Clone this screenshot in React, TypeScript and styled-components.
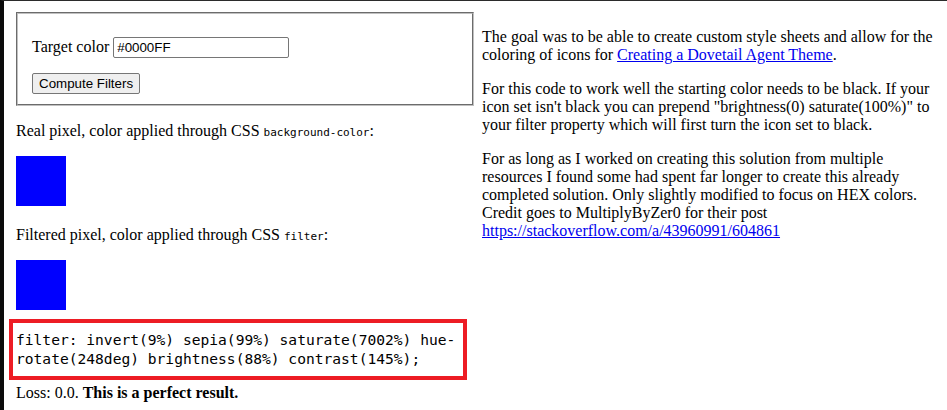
import React from "react";
import styled, { createGlobalStyle } from "styled-components";

const GlobalStyle = createGlobalStyle`
  html, body {
    margin: 0;
    padding: 0;
    background: #ffffff;
  }
  body {
    font-family: "Liberation Serif", "Times New Roman", serif;
    font-size: 16px;
    color: #000000;
  }
`;

const Frame = styled.div`
  box-sizing: border-box;
  min-height: 100vh;
  border-top: 1px solid #2b2b2b;
  border-left: 4px solid #0b0b0b;
  padding: 11px 0 0 12px;
`;

const Columns = styled.div`
  display: flex;
  align-items: flex-start;
  gap: 8px;
`;

const Column = styled.div`
  width: 458px;
  flex: 0 0 458px;
`;

const Text = styled.p`
  margin: 16px 0;
  line-height: 18px;
`;

const Fieldset = styled.fieldset`
  box-sizing: border-box;
  width: 458px;
  margin: 0;
  min-inline-size: 0;
  border: 2px groove rgb(192, 192, 192);
  padding: 22px 14px 10px;
  display: flex;
  flex-direction: column;
  align-items: flex-start;
  gap: 15px;
`;

const FieldRow = styled.label`
  display: flex;
  align-items: center;
  height: 22px;
  line-height: 18px;
`;

const ColorInput = styled.input`
  box-sizing: border-box;
  margin-left: 4px;
  width: 176px;
  height: 21px;
  padding: 1px 3px;
  border: 1px solid #767676;
  border-radius: 2px;
  font-family: "Liberation Sans", Arial, sans-serif;
  font-size: 13.33px;
  color: #000;
  background: #fff;
  outline: none;
`;

const Button = styled.button`
  box-sizing: border-box;
  height: 21px;
  padding: 1px 6px;
  border: 1px solid #767676;
  border-radius: 2px;
  background: #efefef;
  font-family: "Liberation Sans", Arial, sans-serif;
  font-size: 13.33px;
  color: #000;
  cursor: pointer;
`;

const InlineCode = styled.code`
  font-family: "DejaVu Sans Mono", "Liberation Mono", monospace;
  font-size: 11px;
  line-height: 1;
`;

const SwatchLine = styled.div`
  margin: 16px 0;
  height: 54px;
`;

const Swatch = styled.div<{ $color: string }>`
  width: 50px;
  height: 50px;
  background: ${(p) => p.$color};
`;

const CodeWrap = styled.div`
  position: relative;
  margin: 17px 0 16px;
`;

const CodeBlock = styled.pre`
  margin: 0;
  font-family: "DejaVu Sans Mono", "Liberation Mono", monospace;
  font-size: 14.6px;
  line-height: 18.5px;
  white-space: pre-wrap;
  word-break: normal;
`;

const Highlight = styled.div`
  position: absolute;
  left: -7px;
  right: 7px;
  top: -12px;
  bottom: -12px;
  border: 4px solid #ed1c24;
  pointer-events: none;
`;

const Link = styled.a`
  color: #0000ee;
  text-decoration: underline;
`;

export default function App() {
  return (
    <>
      <GlobalStyle />
      <Frame>
        <Columns>
          <Column>
            <Fieldset>
              <FieldRow>
                Target color
                <ColorInput type="text" defaultValue="#0000FF" />
              </FieldRow>
              <Button type="button">Compute Filters</Button>
            </Fieldset>
            <Text>
              Real pixel, color applied through CSS <InlineCode>background-color</InlineCode>:
            </Text>
            <SwatchLine>
              <Swatch $color="#0000ff" />
            </SwatchLine>
            <Text>
              Filtered pixel, color applied through CSS <InlineCode>filter</InlineCode>:
            </Text>
            <SwatchLine>
              <Swatch $color="#0000ff" />
            </SwatchLine>
            <CodeWrap>
              <CodeBlock>
                filter: invert(9%) sepia(99%) saturate(7002%) hue-rotate(248deg) brightness(88%) contrast(145%);
              </CodeBlock>
              <Highlight />
            </CodeWrap>
            <Text>
              Loss: 0.0. <b>This is a perfect result.</b>
            </Text>
          </Column>
          <Column>
            <Text>
              The goal was to be able to create custom style sheets and allow for the coloring of icons for{" "}
              <Link href="#">Creating a Dovetail Agent Theme</Link>.
            </Text>
            <Text>
              For this code to work well the starting color needs to be black. If your icon set isn't black you
              can prepend "brightness(0) saturate(100%)" to your filter property which will first turn the icon
              set to black.
            </Text>
            <Text>
              For as long as I worked on creating this solution from multiple resources I found some had spent
              far longer to create this already completed solution. Only slightly modified to focus on HEX
              colors. Credit goes to MultiplyByZer0 for their post{" "}
              <Link href="#">https://stackoverflow.com/a/43960991/604861</Link>
            </Text>
          </Column>
        </Columns>
      </Frame>
    </>
  );
}
